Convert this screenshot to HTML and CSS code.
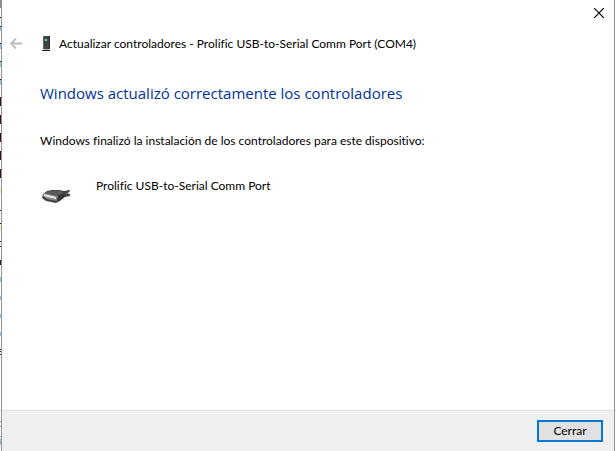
FILE: index.html
```
<!DOCTYPE html>
<html lang="es">
<head>
<meta charset="utf-8">
<meta name="viewport" content="width=device-width, initial-scale=1">
<title>Actualizar controladores</title>
<link rel="stylesheet" href="styles.css">
</head>
<body>
<div class="desktop">
  <svg class="backdrop" width="1" height="451" viewBox="0 0 1 451" shape-rendering="crispEdges" aria-hidden="true">
    <path fill="#8a8a8a" d="M0 0h1v8H0zM0 421h1v1H0zM0 426h1v1H0zM0 436h1v1H0z"/>
    <path fill="#222" d="M0 17h1v1H0zM0 26h1v1H0zM0 43h1v1H0zM0 61h1v1H0zM0 79h1v1H0zM0 210h1v1H0zM0 223h1v1H0zM0 241h1v1H0zM0 246h1v1H0zM0 349h1v1H0zM0 351h1v1H0zM0 354h1v1H0z"/>
    <path fill="#8fc3df" d="M0 27h1v4H0zM0 44h1v5H0zM0 62h1v5H0zM0 80h1v5H0zM0 277h1v5H0zM0 296h1v4H0zM0 314h1v4H0zM0 332h1v4H0zM0 439h1v6H0z"/>
    <path fill="#351020" d="M0 97h1v9H0zM0 115h1v9H0zM0 133h1v9H0zM0 151h1v9H0zM0 169h1v9H0zM0 260h1v5H0z"/>
    <path fill="#f3edb8" d="M0 187h1v6H0zM0 225h1v6H0z"/>
  </svg>
  <main class="dialog">
    <header class="top">
      <button class="close" type="button" aria-label="Cerrar ventana">
        <svg width="10" height="10" viewBox="0 0 10 10" aria-hidden="true"><path d="M0 0l10 10M10 0L0 10" stroke="#000" stroke-width="1.2"/></svg>
      </button>
    </header>
    <div class="titlebar">
      <button class="back" type="button" aria-label="Atrás" disabled>
        <svg width="12" height="12" viewBox="0 0 12 12" fill="none" stroke="#bcbcbc" stroke-width="1.8" aria-hidden="true"><path d="M12 5.5H1M6 .5L1 5.5l5 5"/></svg>
      </button>
      <svg class="device" width="10" height="16" viewBox="0 0 10 16" aria-hidden="true">
        <path d="M2 0h7v13H2z" fill="#414447"/><path d="M2 0h1v13H2z" fill="#606366"/><path d="M8 0h1v13H8z" fill="#292c2e"/>
        <path d="M4 3h2v2H4z" fill="#65e878"/><path d="M3 13h5v1H3z" fill="#aaa"/><path d="M1 14h8v1H1z" fill="#252525"/>
      </svg>
      <span>Actualizar controladores - Prolific USB-to-Serial Comm Port (COM4)</span>
    </div>
    <section class="content">
      <h1>Windows actualizó correctamente los controladores</h1>
      <p>Windows finalizó la instalación de los controladores para este dispositivo:</p>
      <div class="item">
        <svg class="plug" width="32" height="32" viewBox="0 0 32 32" aria-hidden="true">
          <path d="M3 14l4-3 5-1h7l5 1 6-1v1l-2 2h-2l4 1v2l-5 1-5 4-4 2-10-2-4-3z" fill="#454545"/>
          <path d="M6 13l4-2h9l5 2-6 2z" fill="#5c5c5c"/>
          <path d="M3 14l2-1 13 3-1 5-10-2-4-3z" fill="#858585"/>
          <path d="M4 14l12 3v2L7 17l-3-1z" fill="#e5e5e5"/>
          <path d="M18 16l6-3 1 3-4 3-4 2z" fill="#363636"/>
        </svg>
        <span>Prolific USB-to-Serial Comm Port</span>
      </div>
    </section>
    <footer class="footer"><button class="primary" type="button">Cerrar</button></footer>
  </main>
</div>
</body>
</html>
```
FILE: styles.css
```
* { box-sizing: border-box; }

body {
  margin: 0;
  background: #fff;
  color: #000;
  font: 12px/16px Lato, "Open Sans", sans-serif;
  font-variant-ligatures: none;
}

button {
  font: inherit;
  color: inherit;
  padding: 0;
}

svg { display: block; flex: none; }

.desktop {
  display: flex;
  min-height: 100vh;
  padding-right: 1px;
}

.dialog {
  flex: 1;
  display: flex;
  flex-direction: column;
  border: solid #929292;
  border-width: 0 1px;
  background: #fff;
}

.top {
  display: flex;
  justify-content: flex-end;
}

.close {
  display: grid;
  place-items: center;
  width: 30px;
  height: 26px;
  border: 0;
  background: none;
}

.titlebar {
  display: flex;
  align-items: center;
  height: 36px;
  padding-left: 8px;
}

.back {
  border: 0;
  background: none;
}

.device { margin: 0 8px 0 19px; }

.content {
  flex: 1;
  padding: 19px 38px;
}

h1 {
  margin: 0 0 28px;
  color: #003399;
  font-family: "Open Sans", sans-serif;
  font-size: 15px;
  font-weight: 400;
  line-height: 24px;
}

p { margin: 0; }

.item {
  display: flex;
  gap: 24px;
  padding-top: 29px;
}

.plug { margin-top: 2px; }

.footer {
  display: flex;
  justify-content: flex-end;
  padding: 9px 11px;
  border-top: 1px solid #dfdfdf;
  background: #f0f0f0;
}

.primary {
  width: 66px;
  height: 22px;
  border: 2px solid #0078d7;
  background: #e1e1e1;
}
```
